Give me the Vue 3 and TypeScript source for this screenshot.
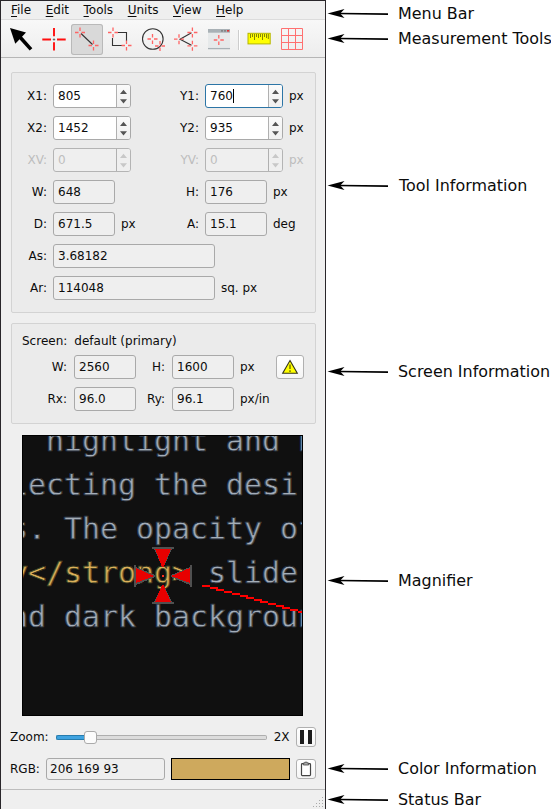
<script setup lang="ts">
interface Cell {
  label: string
  value: string
  unit?: string
  kind: 'spin' | 'read'
  disabled?: boolean
  focused?: boolean
}

const menus: string[] = ['File', 'Edit', 'Tools', 'Units', 'View', 'Help']

const rows: Cell[][] = [
  [
    { label: 'X1:', value: '805', kind: 'spin' },
    { label: 'Y1:', value: '760', unit: 'px', kind: 'spin', focused: true },
  ],
  [
    { label: 'X2:', value: '1452', kind: 'spin' },
    { label: 'Y2:', value: '935', unit: 'px', kind: 'spin' },
  ],
  [
    { label: 'XV:', value: '0', kind: 'spin', disabled: true },
    { label: 'YV:', value: '0', unit: 'px', kind: 'spin', disabled: true },
  ],
  [
    { label: 'W:', value: '648', kind: 'read' },
    { label: 'H:', value: '176', unit: 'px', kind: 'read' },
  ],
  [
    { label: 'D:', value: '671.5', unit: 'px', kind: 'read' },
    { label: 'A:', value: '15.1', unit: 'deg', kind: 'read' },
  ],
]

const notes: string[] = [
  'Menu Bar',
  'Measurement Tools',
  'Tool Information',
  'Screen Information',
  'Magnifier',
  'Color Information',
  'Status Bar',
]

const magnified: { text: string; y: number; gold?: string }[] = [
  { text: '\u00a0\u00a0highlight and h', y: 451 },
  { text: 'lecting the desir', y: 495 },
  { text: 's. The opacity of', y: 539 },
  { text: '\u00a0slider', y: 583, gold: 'y</strong>' },
  { text: 'nd dark backgroun', y: 627 },
]

// Start of every two-pixel step of the measured line
const lineSteps: number[] = [202, 210, 216, 224, 232, 240, 246, 254, 260, 268, 276, 282, 290, 298]

// Small reticle with an open centre, used by most tool icons
const cross = (x: number, y: number): string =>
  `M${x - 5} ${y}H${x - 1.5}M${x + 1.5} ${y}H${x + 5}M${x} ${y - 5}V${y - 1.5}M${x} ${y + 1.5}V${y + 5}`
</script>

<template>
  <div class="page">
    <main class="window">
      <nav class="menubar">
        <span v-for="m in menus" :key="m"><u>{{ m[0] }}</u>{{ m.slice(1) }}</span>
      </nav>

      <div class="toolbar">
        <button class="tool">
          <svg viewBox="0 0 32 31">
            <path d="M5 4L21 8.5L10.3 19.7Z" fill="#000" />
            <path d="M14 12L26 25.4" stroke="#000" stroke-width="3.6" />
          </svg>
        </button>
        <button class="tool">
          <svg viewBox="0 0 32 31">
            <path d="M4.3 15.5H13M19 15.5H27.7M16 4V12.3M16 18.3V26.6" stroke="#ff0f0f" stroke-width="1.9" />
            <path d="M14.8 15.5H17.2M16 14.3V16.7" stroke="#555" stroke-width=".8" />
          </svg>
        </button>
        <button class="tool active">
          <svg viewBox="0 0 32 31">
            <path d="M10 9.5L21.5 20.5" class="ink" />
            <path :d="cross(9, 8.5) + cross(22.5, 21.5)" class="red" />
          </svg>
        </button>
        <button class="tool">
          <svg viewBox="0 0 32 31">
            <path d="M14 8.5H22.5V17M8.5 14V21.5H18" class="ink" />
            <path :d="cross(9, 8.5) + cross(22.5, 21.5)" class="red" />
          </svg>
        </button>
        <button class="tool">
          <svg viewBox="0 0 32 31">
            <circle cx="15.8" cy="15" r="10.3" class="ink" />
            <path :d="cross(15.5, 15) + cross(23, 22)" class="red" />
          </svg>
        </button>
        <button class="tool">
          <svg viewBox="0 0 32 31">
            <path d="M21.5 8.8L10 15.2L21.5 21.3" class="ink" />
            <path :d="cross(9, 15.2) + cross(22.4, 8.5) + cross(22.4, 21.8)" class="red" />
          </svg>
        </button>
        <button class="tool">
          <svg viewBox="0 0 32 31">
            <rect x="5" y="5" width="22" height="20" fill="#e6e9ea" />
            <rect x="5" y="5" width="22" height="3.7" fill="#a9b1b6" />
            <path d="M5 24.6H27" stroke="#a9b1b6" stroke-width="1.3" />
            <path d="M18 6.8H20M21 6.8H23" stroke="#777" stroke-width="1.2" />
            <path d="M24 6.8H26.2" stroke="#d33" stroke-width="1.6" />
            <path :d="cross(15.8, 16)" class="red" />
          </svg>
        </button>
        <i class="separator"></i>
        <button class="tool">
          <svg viewBox="0 0 32 31">
            <rect x="5" y="9.3" width="22.2" height="10.6" fill="#ff0" stroke="#b5b500" />
            <path d="M7.5 10V14M9.5 10V13M11.5 10V16M13.5 10V13M15.5 10V14M17.5 10V13M19.5 10V16M21.5 10V13M23.5 10V14M25.3 10V15" stroke="#77770a" stroke-width=".9" />
          </svg>
        </button>
        <button class="tool">
          <svg viewBox="0 0 32 31">
            <path d="M5.5 4.5H26.5V25.5H5.5ZM12.5 4.5V25.5M19.5 4.5V25.5M5.5 11.5H26.5M5.5 18.5H26.5" fill="none" stroke="#ff7070" />
          </svg>
        </button>
      </div>

      <section class="group tool-info">
        <div v-for="(row, r) in rows" :key="r" class="row">
          <template v-for="c in row" :key="c.label">
            <label :class="{ off: c.disabled }">{{ c.label }}</label>
            <div class="slot">
              <div class="field" :class="[c.kind, { dim: c.disabled, focus: c.focused }]">
                <span class="value">{{ c.value }}<i v-if="c.focused" class="caret"></i></span>
                <span v-if="c.kind === 'spin'" class="steps">
                  <svg viewBox="0 0 13 22"><path d="M3 9L6.5 4.8L10 9ZM3 14.2L6.5 18.4L10 14.2Z" /></svg>
                </span>
              </div>
              <span v-if="c.unit" class="unit" :class="{ off: c.disabled }">{{ c.unit }}</span>
            </div>
          </template>
        </div>
        <div class="row">
          <label>As:</label>
          <div class="slot wide"><div class="field long"><span class="value">3.68182</span></div></div>
        </div>
        <div class="row">
          <label>Ar:</label>
          <div class="slot wide">
            <div class="field long"><span class="value">114048</span></div>
            <span class="unit">sq. px</span>
          </div>
        </div>
      </section>

      <section class="group screen-info">
        <div class="screen-name"><label>Screen:</label><span>default (primary)</span></div>
        <div class="screen-row">
          <label>W:</label><div class="field read"><span class="value">2560</span></div>
          <label>H:</label><div class="field read"><span class="value">1600</span></div>
          <span class="unit">px</span>
          <button class="push warn">
            <svg viewBox="0 0 18 16">
              <path d="M9 1.6L16.3 14.3H1.7Z" fill="#ff0" stroke="#33331a" stroke-width="1.1" />
              <path d="M9 5.5V10M9 11.2V13" stroke="#777700" stroke-width="1.5" />
            </svg>
          </button>
        </div>
        <div class="screen-row">
          <label>Rx:</label><div class="field read"><span class="value">96.0</span></div>
          <label>Ry:</label><div class="field read"><span class="value">96.1</span></div>
          <span class="unit">px/in</span>
        </div>
      </section>

      <div class="magnifier">
        <svg viewBox="22 435 281 281">
          <g class="code">
            <text v-for="l in magnified" :key="l.y" x="10" :y="l.y"><tspan v-if="l.gold" class="gold">{{ l.gold }}</tspan>{{ l.text }}</text>
          </g>
          <g shape-rendering="crispEdges">
            <path d="M152 547H174V549H172L164 566H162L154 549H152ZM152 604H174V602H172L164 586H162L154 602H152ZM134 565H136V567L155 575V577L136 585V587H134ZM192 565H190V567L171 575V577L190 585V587H192Z" fill="#505050" />
            <path d="M155 549H171L163.5 567H162ZM155 602H171L163.5 585H162ZM136 568L154 576L136 583ZM190 568L171 576L190 583Z" fill="#e80000" />
            <path d="M162 575H164V577H162Z" fill="#ff3020" />
            <rect v-for="(x, i) in lineSteps" :key="x" :x="x" :y="585 + i * 2" width="8" height="2" fill="#ff0000" />
          </g>
        </svg>
      </div>

      <div class="zoom-row">
        <label>Zoom:</label>
        <div class="slider"><i class="fill"></i><i class="thumb"></i><i class="track"></i></div>
        <span class="zoom-value">2X</span>
        <button class="push small"><svg viewBox="0 0 18 18"><path d="M3 2H7V16H3ZM11 2H15V16H11Z" fill="#1c1c1c" /></svg></button>
      </div>

      <div class="color-row">
        <label>RGB:</label>
        <div class="field rgb"><span class="value">206 169 93</span></div>
        <div class="swatch"></div>
        <button class="push small">
          <svg viewBox="0 0 18 18">
            <rect x="4.5" y="3.6" width="9" height="12" rx=".8" fill="#fff" stroke="#444" stroke-width="1.2" />
            <path d="M6.3 5V3H7.8V2.2H10.2V3H11.7V5Z" fill="#aaa" stroke="#444" stroke-width=".8" />
          </svg>
        </button>
      </div>

      <footer class="status">
        <svg viewBox="0 0 12 12">
          <path d="M9 0h1v1h-1zM6 3h1v1h-1zM9 3h1v1h-1zM3 6h1v1h-1zM6 6h1v1h-1zM9 6h1v1h-1zM0 9h1v1h-1zM3 9h1v1h-1zM6 9h1v1h-1zM9 9h1v1h-1z" fill="#aaa" />
        </svg>
      </footer>
    </main>

    <aside class="notes">
      <div v-for="n in notes" :key="n" class="note">
        <svg viewBox="0 0 62 12">
          <path d="M12 5.5L61 6.2" stroke="#000" stroke-width="1.7" />
          <path d="M.5 5.4L17.5 1.1L13.2 5.6L17.5 10.1Z" />
        </svg>
        <span>{{ n }}</span>
      </div>
    </aside>
  </div>
</template>

<style>
body {
  background: #fff;
  overflow: hidden;
}
</style>

<style scoped>
* { box-sizing: border-box; }
.page {
  display: flex;
  width: 551px;
  height: 809px;
  overflow: hidden;
  font: 12px/14px "DejaVu Sans", sans-serif;
  color: #0c0c0c;
}
svg { display: block; }
button { padding: 0; font: inherit; }
.window {
  display: flex;
  flex: none;
  flex-direction: column;
  width: 326px;
  height: 809px;
  background: #efefef;
  border: 1px solid #29262a;
  border-bottom: 0;
}
.menubar {
  display: flex;
  gap: 14.6px;
  height: 18px;
  padding: 2px 0 0 10px;
}
.menubar u { text-underline-offset: 2px; text-decoration-thickness: 1px; }
.toolbar {
  display: flex;
  gap: 1px;
  height: 39px;
  padding: 5px 0 0 4px;
  border-top: 1px solid #dcdcdc;
  border-bottom: 1px solid #b6b6b6;
  background: linear-gradient(#f8f8f8, #ededed);
}
.tool {
  flex: none;
  width: 32px;
  height: 31px;
  margin-top: -1px;
  border: 0;
  border-radius: 3px;
  background: none;
}
.tool.active { background: #d9d9d9; box-shadow: inset 0 0 0 1px #b9b9b9; }
.tool svg { width: 32px; height: 31px; }
.ink { fill: none; stroke: #333; stroke-width: 1.1; }
.red { fill: none; stroke: #ff6464; stroke-width: 1.3; }
.separator {
  width: 2px;
  height: 20px;
  margin: 5px 2px 0 2px;
  border-left: 1px solid #cdcdcd;
  border-right: 1px solid #fff;
}
.group {
  width: 305px;
  margin-left: 10px;
  border: 1px solid #d3d3d3;
  border-radius: 2px;
  background: #ebebeb;
}
.tool-info {
  display: flex;
  flex-direction: column;
  gap: 8px;
  height: 241px;
  margin-top: 14px;
  padding: 11px 0 0 9px;
}
.row {
  display: grid;
  grid-template-columns: 26px 110px 30px 100px;
  column-gap: 6px;
  height: 24px;
  align-items: center;
}
label { text-align: right; }
.slot { display: flex; align-items: center; gap: 6px; }
.slot.wide { grid-column: 2 / 5; }
.unit { white-space: nowrap; }
.off { color: #bdbdbd; }
.field {
  display: flex;
  flex: none;
  align-items: center;
  height: 24px;
  padding-left: 4px;
  border: 1px solid #a9a9a9;
  border-radius: 3px;
  background: #efefef;
}
.spin { width: 78px; background: #fff; }
.read { width: 62px; }
.long { width: 162px; }
.value { flex: 1; display: flex; align-items: center; white-space: pre; }
.caret { width: 1px; height: 14px; background: #000; }
.steps {
  width: 14px;
  height: 22px;
  border-left: 1px solid #b0b0b0;
  border-radius: 0 2px 2px 0;
  background: linear-gradient(#fafafa, #f0f0f0);
  fill: #555;
}
.steps svg { width: 13px; height: 22px; }
.focus { border-color: #2c75a6; }
.dim { color: #bebebe; background: #efefef; border-color: #b4b4b4; }
.dim .steps { fill: #c8c8c8; background: #efefef; }
.screen-info {
  height: 101px;
  margin-top: 10px;
  padding: 10px 0 0 10px;
}
.screen-name { display: flex; gap: 7px; height: 15px; margin-bottom: 6px; }
.screen-row {
  display: grid;
  grid-template-columns: 46px 62px 24px 62px 30px 28px;
  column-gap: 6px;
  align-items: center;
  height: 24px;
  margin-bottom: 8px;
}
.screen-row label { padding-right: 1px; }
.push {
  display: flex;
  align-items: center;
  justify-content: center;
  border: 1px solid #b0b0b0;
  border-radius: 3px;
  background: linear-gradient(#fff, #f5f5f5);
}
.warn { width: 28px; height: 24px; }
.warn svg { width: 18px; height: 16px; }
.small { width: 20px; height: 20px; }
.small svg { width: 18px; height: 18px; flex: none; }
.magnifier {
  width: 281px;
  height: 281px;
  margin: 11px 0 0 21px;
  border: 1px solid #000;
  background: #101010;
  overflow: hidden;
}
.magnifier svg { width: 281px; height: 281px; margin: -1px; }
.code {
  font: 29.9px "DejaVu Sans Mono", monospace;
  fill: #a3adb8;
  stroke: #101010;
  stroke-width: .3px;
  text-shadow: -.5px 0 #1c4170, .5px 0 #5a4028;
}
.gold { fill: #dcb05a; text-shadow: -.5px 0 #35502c, .5px 0 #6a4a20; }
.zoom-row {
  display: flex;
  align-items: center;
  height: 20px;
  margin: 11px 0 0 9px;
}
.slider {
  display: flex;
  align-items: center;
  width: 211px;
  margin-left: 7px;
}
.fill { width: 28px; height: 5px; background: #3fa3e0; border: 1px solid #277cad; border-right: 0; border-radius: 2px 0 0 2px; }
.thumb { width: 13px; height: 13px; background: #fcfcfc; border: 1px solid #aaa; border-radius: 3px; }
.track { flex: 1; height: 5px; background: #dcdcdc; border: 1px solid #aeaeae; border-left: 0; border-radius: 0 2px 2px 0; }
.zoom-value { width: 22px; margin-left: 7px; }
.color-row {
  display: flex;
  align-items: center;
  height: 22px;
  margin: 11px 0 0 9px;
}
.rgb { width: 119px; height: 22px; padding-left: 3px; margin-left: 6px; }
.color-row label { width: 30px; text-align: left; }
.swatch { width: 119px; height: 22px; margin: 0 6px; border: 1px solid #000; background: #cea95d; }
.status {
  display: flex;
  justify-content: flex-end;
  align-items: flex-end;
  flex: 1;
  margin-top: 9px;
  border-top: 1px solid #bdbdbd;
}
.status svg { width: 12px; height: 12px; }
.notes { width: 225px; font-size: 15.95px; line-height: 20px; }
.note {
  display: flex;
  gap: 9px;
  align-items: center;
  height: 20px;
  padding-left: 1px;
  white-space: nowrap;
}
.note svg { flex: none; width: 62px; height: 12px; }
.note:nth-child(1) { margin-top: 4px; }
.note:nth-child(2) { margin-top: 5px; }
.note:nth-child(3) { margin-top: 127px; }
.note:nth-child(3) span { padding-left: 1px; }
.note:nth-child(4) { margin-top: 166px; }
.note:nth-child(5) { margin-top: 189px; }
.note:nth-child(6) { margin-top: 168px; }
.note:nth-child(7) { margin-top: 11px; }
</style>
